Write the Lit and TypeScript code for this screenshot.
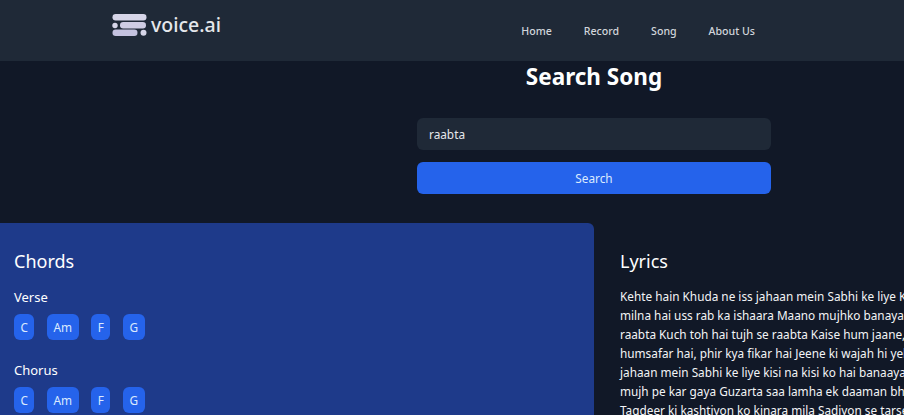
import { LitElement, html, css } from "lit";
import { customElement } from "lit/decorators.js";

const LYRICS = [
  "Kehte hain Khuda ne iss jahaan mein Sabhi ke liye Kisi na kisi ko hai banaaya har kisi ke liye Tera",
  "milna hai uss rab ka ishaara Maano mujhko banaya tere jaise hi kisi ke liye Kuch toh hai tujh se",
  "raabta Kuch toh hai tujh se raabta Kaise hum jaane, hume kya pata Kuch toh hai tujh se raabta Tu",
  "humsafar hai, phir kya fikar hai Jeene ki wajah hi yehi hai Marna isi ke liye Kehte hain Khuda ne iss",
  "jahaan mein Sabhi ke liye kisi na kisi ko hai banaaya har kisi ke liye Meherbani jaate jaate",
  "mujh pe kar gaya Guzarta saa lamha ek daaman bhar gaya Tera nazaara mila, roshan sitaara mila",
  "Taqdeer ki kashtiyon ko kinara mila Sadiyon se tarse hain jaisi zindagi ke liye Teri sohbat mein",
];
const CHORDS = ["C", "Am", "F", "G"];

@customElement("app-root")
export class AppRoot extends LitElement {
  static styles = css`
    :host { display: block; width: 904px; height: 415px; overflow: hidden; background: #111827; }
    .page {
      width: 1188px; color: #fff; background: #111827;
      font-family: "Noto Sans", "Open Sans", sans-serif; font-size: 11.8px;
    }
    .nav {
      width: 904px; height: 61px; box-sizing: border-box; background: #1f2937;
      display: flex; justify-content: space-between; align-items: center;
      padding: 0 149px 0 112px;
    }
    .brand { display: flex; align-items: center; gap: 4px; margin-top: -11px; }
    .brand svg { display: block; }
    .brand span { font-size: 19.5px; font-weight: 500; color: #e5e7eb; line-height: 24px; }
    .links { display: flex; gap: 32px; }
    .links a { color: #d1d5db; font-size: 10.6px; font-weight: 500; line-height: 18px; }
    .search { height: 162px; display: flex; flex-direction: column; align-items: center; }
    h1 { margin: 0; font-size: 22.5px; line-height: 32px; font-weight: 700; }
    form { width: 354px; margin-top: 25px; display: flex; flex-direction: column; gap: 12px; }
    .input {
      height: 32px; box-sizing: border-box; padding: 0 12px; border-radius: 6px;
      background: #1f2937; color: #e5e7eb; font-size: 11.8px; line-height: 32px;
    }
    .btn {
      height: 32px; border-radius: 6px; background: #2563eb; color: #dbeafe;
      font-size: 11.8px; line-height: 32px; text-align: center;
    }
    .panels { display: grid; grid-template-columns: 594px 1fr; }
    .chords { background: #1e3a8a; border-radius: 0 6px 0 0; padding: 24px 14px; height: 300px; box-sizing: border-box; }
    .lyrics { padding: 24px 26px; }
    h2 { margin: 0 0 12px; font-size: 18px; line-height: 28px; font-weight: 400; }
    h3 { margin: 0 0 7px; font-size: 13px; line-height: 20px; font-weight: 400; }
    .row { display: flex; gap: 12.6px; margin-bottom: 20px; }
    .pill {
      height: 26px; padding: 0 6.5px; border-radius: 6px; background: #2563eb; color: #dbeafe;
      font-size: 11.8px; line-height: 26px;
    }
    .line { display: block; white-space: nowrap; line-height: 19px; font-size: 11.8px; color: #f3f4f6; }
  `;

  private section(name: string) {
    return html`<h3>${name}</h3><div class="row">${CHORDS.map((c) => html`<span class="pill">${c}</span>`)}</div>`;
  }

  render() {
    return html`<div class="page">
      <header class="nav">
        <div class="brand">
          <svg width="35" height="22" viewBox="0 0 35 22" aria-hidden="true">
            <rect x="0.5" y="0" width="34" height="6.5" rx="3.2" fill="#d6d5e8" />
            <circle cx="3" cy="11.5" r="2.7" fill="#d6d5e8" />
            <rect x="8" y="8" width="26" height="6.5" rx="3.2" fill="#cfcde4" />
            <rect x="0.5" y="15.5" width="25" height="6.5" rx="3.2" fill="#c4c2df" />
            <circle cx="31.5" cy="18.7" r="3" fill="#d6d5e8" />
          </svg>
          <span>voice.ai</span>
        </div>
        <nav class="links"><a>Home</a><a>Record</a><a>Song</a><a>About Us</a></nav>
      </header>
      <section class="search">
        <h1>Search Song</h1>
        <form>
          <div class="input">raabta</div>
          <div class="btn">Search</div>
        </form>
      </section>
      <main class="panels">
        <div class="chords">
          <h2>Chords</h2>
          ${this.section("Verse")}
          ${this.section("Chorus")}
        </div>
        <div class="lyrics">
          <h2>Lyrics</h2>
          ${LYRICS.map((l) => html`<span class="line">${l}</span>`)}
        </div>
      </main>
    </div>`;
  }
}
